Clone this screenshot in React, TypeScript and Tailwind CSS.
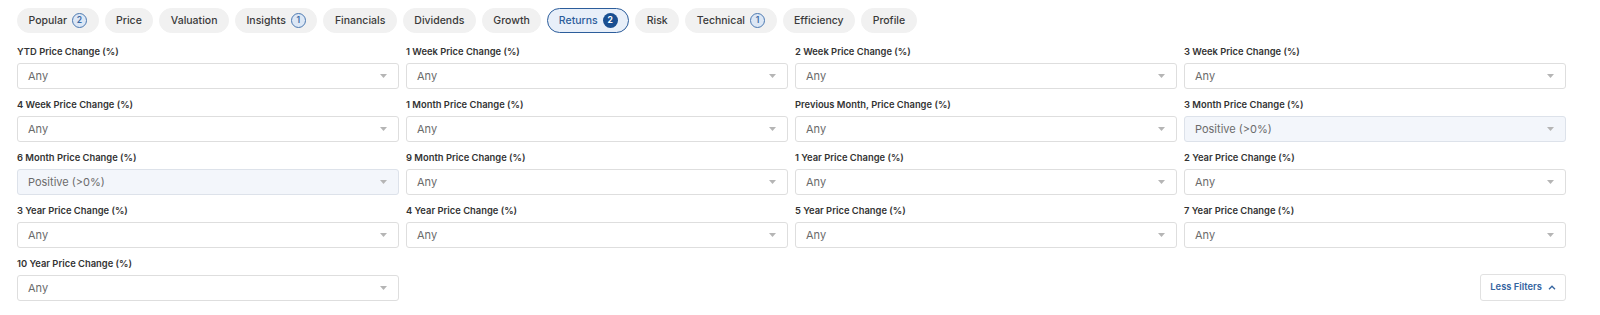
import React from "react";

type Tab = { name: string; badge?: number; active?: boolean };

const tabs: Tab[] = [
  { name: "Popular", badge: 2 },
  { name: "Price" },
  { name: "Valuation" },
  { name: "Insights", badge: 1 },
  { name: "Financials" },
  { name: "Dividends" },
  { name: "Growth" },
  { name: "Returns", badge: 2, active: true },
  { name: "Risk" },
  { name: "Technical", badge: 1 },
  { name: "Efficiency" },
  { name: "Profile" },
];

const fields: { label: string; value: string; set?: boolean }[] = [
  { label: "YTD Price Change (%)", value: "Any" },
  { label: "1 Week Price Change (%)", value: "Any" },
  { label: "2 Week Price Change (%)", value: "Any" },
  { label: "3 Week Price Change (%)", value: "Any" },
  { label: "4 Week Price Change (%)", value: "Any" },
  { label: "1 Month Price Change (%)", value: "Any" },
  { label: "Previous Month, Price Change (%)", value: "Any" },
  { label: "3 Month Price Change (%)", value: "Positive (>0%)", set: true },
  { label: "6 Month Price Change (%)", value: "Positive (>0%)", set: true },
  { label: "9 Month Price Change (%)", value: "Any" },
  { label: "1 Year Price Change (%)", value: "Any" },
  { label: "2 Year Price Change (%)", value: "Any" },
  { label: "3 Year Price Change (%)", value: "Any" },
  { label: "4 Year Price Change (%)", value: "Any" },
  { label: "5 Year Price Change (%)", value: "Any" },
  { label: "7 Year Price Change (%)", value: "Any" },
  { label: "10 Year Price Change (%)", value: "Any" },
];

function Field({ label, value, set }: { label: string; value: string; set?: boolean }) {
  return (
    <div className="flex flex-col">
      <div className="text-[9.4px] leading-[14px] font-semibold text-[#333333] mb-[4px] whitespace-nowrap">
        {label}
      </div>
      <div
        className={
          "h-[26px] rounded-[3px] border flex items-center justify-between pl-[10px] pr-[10px] " +
          (set ? "bg-[#f3f6fb] border-[#dde2ea]" : "bg-white border-[#dedede]")
        }
      >
        <span className="text-[11px] text-[#6b6b6b]">{value}</span>
        <svg width="7" height="4" viewBox="0 0 7 4" className="mr-[1px]">
          <path d="M0 0 L7 0 L3.5 4 Z" fill="#b5b5b5" />
        </svg>
      </div>
    </div>
  );
}

export default function App() {
  return (
    <div
      className="w-[1600px] h-[315px] bg-white pl-[17px] pr-[34px] pt-[8px]"
      style={{ fontFamily: "Inter, 'Noto Sans', sans-serif" }}
    >
      <div className="flex gap-[6px]">
        {tabs.map((t) => (
          <div
            key={t.name}
            className={
              "h-[25px] rounded-full px-[10.5px] flex items-center gap-[5px] text-[10.5px] font-medium border " +
              (t.active
                ? "bg-[#e8eff9] border-[#2c5d9b] text-[#2c5d9b]"
                : "bg-[#f1f1f1] border-[#f1f1f1] text-[#3a3a3a]")
            }
          >
            <span>{t.name}</span>
            {t.badge !== undefined &&
              (t.active ? (
                <span className="w-[15px] h-[15px] rounded-full bg-[#1a4f91] text-white text-[8.5px] font-bold flex items-center justify-center">
                  {t.badge}
                </span>
              ) : (
                <span className="w-[15px] h-[15px] rounded-full bg-[#dce7f5] border border-[#4c79b1] text-[#3c6aa3] text-[8.5px] font-semibold flex items-center justify-center">
                  {t.badge}
                </span>
              ))}
          </div>
        ))}
      </div>
      <div className="grid grid-cols-4 gap-x-[7px] gap-y-[9px] mt-[12px]">
        {fields.map((f) => (
          <Field key={f.label} {...f} />
        ))}
        <div className="col-start-4 self-end justify-self-end">
          <button className="h-[27px] px-[9px] rounded-[3px] border border-[#e1e1e1] bg-white flex items-center gap-[6px] text-[9.4px] font-semibold text-[#34649f]">
            <span>Less Filters</span>
            <svg width="8" height="5" viewBox="0 0 8 5">
              <path d="M1 4.2 L4 1.2 L7 4.2" fill="none" stroke="#34649f" strokeWidth="1.3" />
            </svg>
          </button>
        </div>
      </div>
    </div>
  );
}
